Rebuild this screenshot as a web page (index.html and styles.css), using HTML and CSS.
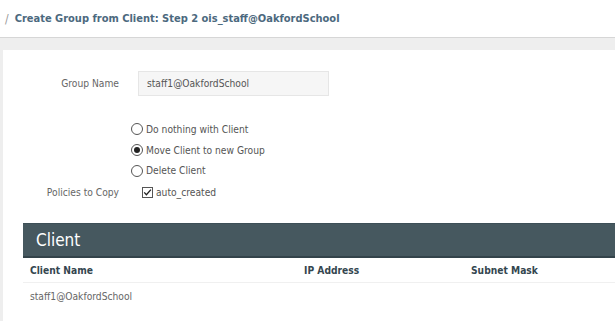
FILE: index.html
```html
<!DOCTYPE html>
<html>
<head>
<meta charset="utf-8">
<link rel="stylesheet" href="styles.css">
</head>
<body>
<header class="topbar">
  <span class="crumb-sep">/</span>
  <h1 class="title">Create Group from Client: Step 2 ois_staff@OakfordSchool</h1>
</header>
<main class="page">
  <section class="panel">
    <div class="form">
      <label class="label">Group Name</label>
      <div class="field"><input class="text-input" type="text" value="staff1@OakfordSchool"></div>

      <div class="label"></div>
      <div class="field radios">
        <label class="radio"><span class="radio-dot"></span>Do nothing with Client</label>
        <label class="radio"><span class="radio-dot checked"></span>Move Client to new Group</label>
        <label class="radio"><span class="radio-dot"></span>Delete Client</label>
      </div>

      <label class="label label-policies">Policies to Copy</label>
      <div class="field checkrow">
        <span class="checkbox"><svg width="11" height="11" viewBox="0 0 11 11"><rect x="0.5" y="0.5" width="10" height="10" fill="#fff" stroke="#555"/><path d="M2.2 5.4 L4.4 7.8 L8.9 2.6" fill="none" stroke="#222" stroke-width="1.3"/></svg></span>
        <span>auto_created</span>
      </div>
    </div>

    <div class="client-block">
      <div class="client-bar">Client</div>
      <div class="table">
        <div class="trow thead">
          <div class="c1">Client Name</div>
          <div class="c2">IP Address</div>
          <div class="c3">Subnet Mask</div>
        </div>
        <div class="trow tbody">
          <div class="c1">staff1@OakfordSchool</div>
          <div class="c2"></div>
          <div class="c3"></div>
        </div>
      </div>
    </div>
  </section>
</main>
</body>
</html>
```
FILE: styles.css
```css
* { box-sizing: border-box; }
html, body { margin: 0; padding: 0; }
body {
  font-family: "DejaVu Sans Condensed", "DejaVu Sans", sans-serif;
  font-size: 10.2px;
  color: #555;
  background: #fff;
  width: 615px;
  height: 321px;
  overflow: hidden;
}
.topbar {
  height: 38px;
  display: flex;
  align-items: center;
  padding-left: 5px;
  border-bottom: 1px solid #d6d6d6;
  background: #fff;
}
.crumb-sep { color: #999; font-size: 12px; margin-right: 6px; }
.title {
  margin: 0;
  font-size: 11px;
  font-weight: bold;
  color: #4c697e;
}
.page {
  background: #eeeeee;
  padding: 12px 0 0 3px;
  height: 283px;
}
.panel {
  background: #fff;
  height: 100%;
  padding-top: 21px;
}
.form {
  display: grid;
  grid-template-columns: 135px 1fr;
  align-items: center;
}
.label {
  text-align: right;
  padding-right: 19px;
  color: #666;
}
.field { display: flex; }
.text-input {
  width: 191px;
  height: 25px;
  border: 1px solid #e6e6e6;
  background: #f6f6f6;
  font: inherit;
  color: #555;
  padding: 0 8px;
  outline: none;
}
.radios {
  flex-direction: column;
  margin-top: 23px;
  margin-left: -7px;
}
.radio {
  display: flex;
  align-items: center;
  height: 20.7px;
  color: #555;
}
.radio-dot {
  width: 12px;
  height: 12px;
  border: 1px solid #555;
  border-radius: 50%;
  margin-right: 3px;
  position: relative;
  background: #fff;
}
.radio-dot.checked::after {
  content: "";
  position: absolute;
  left: 2px; top: 2px;
  width: 6px; height: 6px;
  border-radius: 50%;
  background: #222;
}
.checkrow {
  align-items: center;
  height: 21px;
  margin-top: 1px;
  margin-left: 4px;
  color: #555;
}
.checkbox { display: flex; margin-right: 3px; }
.label-policies { height: 21px; line-height: 21px; margin-top: 1px; }
.client-block {
  margin-top: 20px;
  margin-left: 20px;
}
.client-bar {
  height: 35px;
  background: #46585f;
  border-top: 1px solid #3d4f57;
  border-bottom: 2px solid #33434a;
  color: #fff;
  font-size: 17px;
  line-height: 32px;
  padding-left: 13px;
}
.trow {
  display: grid;
  grid-template-columns: 274px 167px 1fr;
  padding-left: 7px;
}
.thead {
  height: 25px;
  align-items: center;
  font-weight: bold;
  color: #34464f;
  font-size: 10.2px;
  border-bottom: 1px solid #f0f0f0;
}
.tbody {
  height: 27px;
  align-items: center;
  color: #666;
}
```
